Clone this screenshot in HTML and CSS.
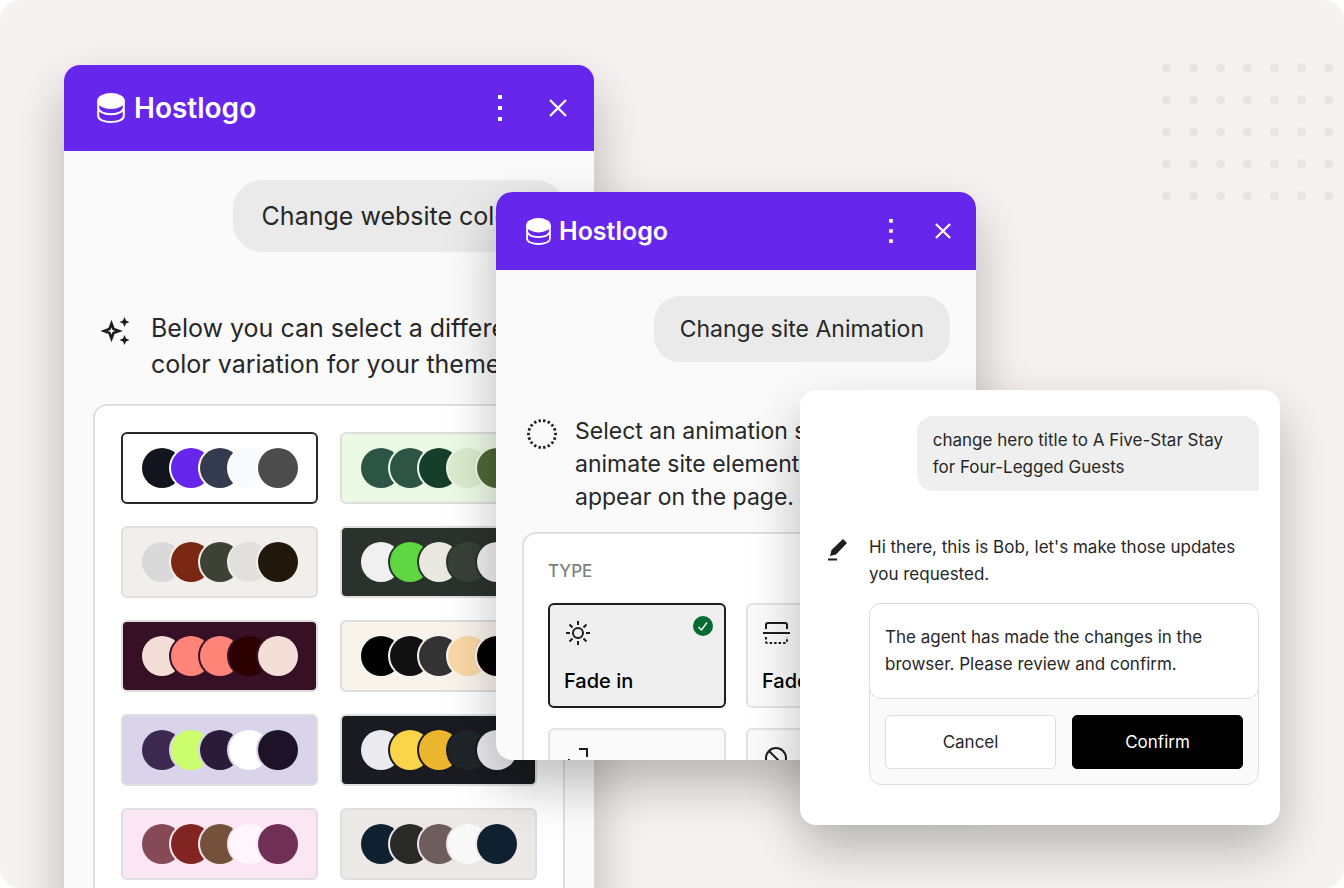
FILE: index.html
```html
<!DOCTYPE html>
<html lang="en">
<head>
  <meta charset="UTF-8" />
  <meta name="viewport" content="width=device-width, initial-scale=1.0"/>
  <title>Hostlogo Assistant</title>
  <link rel="stylesheet" href="styles.css">
</head>
<body>

<!-- Shared icons -->
<svg class="icon-defs" aria-hidden="true">
  <symbol id="logo" viewBox="0 0 28 30">
    <ellipse cx="14" cy="8" rx="13.800" ry="8" fill="#fff"/>
    <path fill="none" stroke="#fff" stroke-width="2" d="M1.200 8v15c0 3.500 5.800 6 12.800 6s12.800-2.500 12.800-6V8M1.200 15c1 3.700 6 6.200 12.800 6.200s11.800-2.500 12.800-6.200"/>
  </symbol>
  <symbol id="dots" viewBox="0 0 4 26">
    <path fill="#fff" d="M0 0h4v4H0zM0 11h4v4H0zM0 22h4v4H0z"/>
  </symbol>
  <symbol id="close" viewBox="0 0 18 18">
    <path fill="none" stroke="#fff" stroke-width="2.400" d="M1 1l16 16M17 1L1 17"/>
  </symbol>
</svg>

<main class="stage">
  <div class="dot-grid"></div>

  <!-- Color variations -->
  <section class="panel panel-colors">
    <header class="panel-header">
      <svg class="logo"><use href="#logo"/></svg>
      <span class="brand">Hostlogo</span>
      <button class="icon-btn menu-btn" aria-label="Menu"><svg><use href="#dots"/></svg></button>
      <button class="icon-btn close-btn" aria-label="Close"><svg><use href="#close"/></svg></button>
    </header>
    <div class="panel-body">
      <p class="bubble">Change website colors</p>
      <div class="message">
        <svg class="message-icon" viewBox="0 0 30 30" fill="#1e1e1e">
          <path fill="none" stroke="#1e1e1e" stroke-width="2.600" d="M10.500 7.500l2 5.500 5.500 2-5.500 2-2 5.500-2-5.500L3 15l5.500-2z"/>
          <path d="M23.500 1l1.500 3.500 3.500 1.500L25 7.500 23.500 11 22 7.500 18.500 6 22 4.500zM23.500 19l1.500 3.500 3.500 1.500-3.500 1.500-1.500 3.500-1.500-3.500-3.500-1.500 3.500-1.500z"/>
        </svg>
        <p>Below you can select a different<br>color variation for your theme.</p>
      </div>
      <div class="card swatches" id="swatches"></div>
    </div>
  </section>

  <!-- Animation picker -->
  <section class="panel panel-animation">
    <header class="panel-header">
      <svg class="logo"><use href="#logo"/></svg>
      <span class="brand">Hostlogo</span>
      <button class="icon-btn menu-btn" aria-label="Menu"><svg><use href="#dots"/></svg></button>
      <button class="icon-btn close-btn" aria-label="Close"><svg><use href="#close"/></svg></button>
    </header>
    <div class="panel-body">
      <p class="bubble">Change site Animation</p>
      <div class="message">
        <svg class="message-icon" viewBox="0 0 30 30">
          <circle cx="15" cy="15" r="13.500" fill="none" stroke="#1e1e1e" stroke-width="2.800" pathLength="90" stroke-dasharray="2.600 2.400" stroke-dashoffset="1.300"/>
        </svg>
        <p>Select an animation style to<br>animate site elements as they<br>appear on the page.</p>
      </div>
      <div class="card">
        <h2 class="card-title">TYPE</h2>
        <div class="tiles">
          <button class="tile selected" aria-pressed="true">
            <svg class="tile-icon" viewBox="0 0 28 28" fill="none" stroke="#1e1e1e" stroke-width="2">
              <circle cx="14" cy="14" r="5"/>
              <path d="M14 2v4M14 22v4M2 14h4M22 14h4M5.500 5.500l3 3M19.500 19.500l3 3M22.500 5.500l-3 3M8.500 19.500l-3 3"/>
            </svg>
            <span>Fade in</span>
            <svg class="check" viewBox="0 0 20 20">
              <circle cx="10" cy="10" r="10" fill="#056b31"/>
              <path d="M5.500 11l3 3 5.500-7.500" fill="none" stroke="#fff" stroke-width="1.400"/>
            </svg>
          </button>
          <button class="tile">
            <svg class="tile-icon" viewBox="0 0 28 28" fill="none" stroke="#1e1e1e" stroke-width="2">
              <path d="M4 10V6q0-2 2-2h17q2 0 2 2v4M1 14h27"/>
              <path stroke-dasharray="2.500 2" d="M4 18v5q0 1 1 1h19q1 0 1-1v-5"/>
            </svg>
            <span>Fade up</span>
          </button>
          <button class="tile" aria-label="Zoom in">
            <svg class="tile-icon" viewBox="0 0 28 28" fill="none" stroke="#1e1e1e" stroke-width="2">
              <path d="M15 5h8v8M5 15v8h8"/>
            </svg>
          </button>
          <button class="tile" aria-label="None">
            <svg class="tile-icon" viewBox="0 0 28 28" fill="none" stroke="#1e1e1e" stroke-width="2">
              <circle cx="14" cy="14" r="10"/>
              <path d="M7 7l14 14"/>
            </svg>
          </button>
        </div>
      </div>
    </div>
  </section>

  <!-- Confirm chat -->
  <section class="panel panel-confirm">
    <p class="bubble">change hero title to A Five-Star Stay<br>for Four-Legged Guests</p>
    <div class="message">
      <svg class="message-icon" viewBox="0 0 20 22" fill="#1e1e1e">
        <path d="M15 0l4 4L8 15.500 2 17l1.500-6z"/>
        <path d="M0 19.500h9v2H0z"/>
      </svg>
      <p>Hi there, this is Bob, let's make those updates<br>you requested.</p>
    </div>
    <div class="confirm-box">
      <p class="confirm-text">The agent has made the changes in the<br>browser. Please review and confirm.</p>
      <div class="confirm-actions">
        <button class="btn">Cancel</button>
        <button class="btn btn-dark">Confirm</button>
      </div>
    </div>
  </section>
</main>

<script>
// first colour is the background, the rest are the palette dots
const palettes = [
  ["#ffffff", "#12151e", "#6726eb", "#353b4e", "#f9fafd", "#4c4c4c"],
  ["#ecfae5", "#2d5545", "#2d5545", "#153e2b", "#daebce", "#4f6836"],
  ["#f2eeeb", "#d9d9d9", "#7a2813", "#3e4234", "#e1e0dc", "#1f180b"],
  ["#29332b", "#f0f0f0", "#5fd743", "#e9e9e0", "#374138", "#f0f0f0"],
  ["#381026", "#f3dfd8", "#ff8579", "#ff8579", "#2b0200", "#f3dfd8"],
  ["#f8f3eb", "#000000", "#111111", "#333333", "#fad8a6", "#000000"],
  ["#d9d4e9", "#3c2a50", "#cbfd6d", "#2a1b38", "#ffffff", "#1e1229"],
  ["#1a1b20", "#ebebef", "#fad54a", "#ecb72f", "#1f262a", "#ebebef"],
  ["#fae6f5", "#864956", "#822422", "#75503a", "#fff5fd", "#702f55"],
  ["#ece8e5", "#0f2031", "#2a2a28", "#6f5d5e", "#f8f8f8", "#0f2031"],
  ["#ffffff", "#12151e", "#6726eb", "#353b4e", "#f9fafd", "#4c4c4c"],
  ["#ecfae5", "#2d5545", "#2d5545", "#153e2b", "#daebce", "#4f6836"]
];

document.getElementById("swatches").innerHTML = palettes.map(([bg, ...colors], i) => `
  <button class="swatch${i === 0 ? " selected" : ""}" style="--bg: ${bg}" aria-label="Palette ${i + 1}">
    ${colors.map(c => `<span class="dot" style="background: ${c}"></span>`).join("")}
  </button>`).join("");
</script>

</body>
</html>
```

FILE: styles.css
```css
* {
  box-sizing: border-box;
}
body {
  margin: 0;
  background: #fff;
  color: #272727;
  font-family: Inter, sans-serif;
}
p, h2 {
  margin: 0;
}
button {
  font-family: inherit;
  color: inherit;
  cursor: pointer;
}
.icon-defs {
  position: absolute;
  width: 0;
  height: 0;
}

/* the panels share one grid row and overlap by column */
.stage {
  position: relative;
  display: grid;
  grid-template-columns: 432fr 98fr 206fr 176fr 304fr;
  align-items: start;
  height: 100vh;
  padding: 0 64px;
  overflow: hidden;
  background: #f5f2f1;
  border-radius: 20px;
}
.dot-grid {
  position: absolute;
  top: 52px;
  right: 2px;
  width: 189px;
  height: 161px;
  background: radial-gradient(circle, #e8e5e4 4px, transparent 5px) 0 0 / 27px 32px;
}

.panel {
  position: relative;
  grid-row: 1;
  background: #fafafa;
  border-radius: 16px;
  box-shadow: 0 24px 52px rgba(0, 0, 0, 0.26);
}
.panel-colors {
  grid-column: 1 / 3;
  margin-top: 65px;
  font-size: 25px;
  line-height: 36px;
}
.panel-animation {
  grid-column: 2 / 5;
  height: 568px;
  margin-top: 192px;
  overflow: hidden;
  font-size: 23px;
  line-height: 33px;
}
.panel-confirm {
  grid-column: 4 / 6;
  margin-top: 390px;
  padding: 26px 21px 40px 27px;
  background: #fff;
  font-size: 17px;
  line-height: 27px;
}

/* header */
.panel-header {
  display: flex;
  align-items: center;
  height: 86px;
  padding: 0 27px 0 33px;
  background: #6726eb;
  border-radius: 16px 16px 0 0;
  color: #fff;
}
.logo {
  width: 28px;
  height: 30px;
}
.brand {
  margin-left: 9px;
  font-size: 28px;
  font-weight: 600;
}
.icon-btn {
  display: flex;
  padding: 0;
  background: none;
  border: none;
}
.menu-btn {
  margin-left: auto;
}
.menu-btn svg {
  width: 4px;
  height: 26px;
}
.close-btn {
  margin-left: 47px;
}
.close-btn svg {
  width: 18px;
  height: 18px;
}
.panel-animation .panel-header {
  height: 78px;
  padding: 0 25px 0 30px;
}
.panel-animation .logo {
  width: 25px;
  height: 27px;
}
.panel-animation .brand {
  margin-left: 8px;
  font-size: 25px;
}
.panel-animation .menu-btn svg {
  height: 24px;
}
.panel-animation .close-btn {
  margin-left: 42px;
}
.panel-animation .close-btn svg {
  width: 16px;
  height: 16px;
}

/* chat */
.panel-body {
  padding: 29px;
}
.panel-animation .panel-body {
  padding: 26px;
}
.bubble {
  width: fit-content;
  margin-left: auto;
  padding: 18px 33px 18px 29px;
  background: #eaeaea;
  border-radius: 29px;
  white-space: nowrap;
}
.panel-animation .bubble {
  padding: 17px 26px 16px;
  border-radius: 26px;
}
.panel-confirm .bubble {
  padding: 11px 36px 10px 16px;
  background: #efefef;
  border-radius: 16px 16px 0 16px;
}
.message {
  display: flex;
  gap: 20px;
  margin-top: 58px;
  padding-left: 8px;
  white-space: nowrap;
}
.message-icon {
  flex: none;
  width: 30px;
  height: 30px;
  margin-top: 6px;
}
.panel-animation .message {
  gap: 18px;
  margin-top: 53px;
  padding-left: 5px;
}
.panel-animation .message-icon {
  margin-top: 4px;
}
.panel-confirm .message {
  gap: 21px;
  margin-top: 43px;
  padding-left: 1px;
}
.panel-confirm .message-icon {
  width: 20px;
  height: 22px;
  margin-top: 5px;
}

.card {
  margin-top: 22px;
  padding: 26px;
  background: #fff;
  border: 2px solid #e0e0e0;
  border-radius: 14px;
}
.swatches {
  display: grid;
  grid-template-columns: 1fr 1fr;
  gap: 22px;
}
.swatch {
  display: flex;
  justify-content: center;
  align-items: center;
  height: 72px;
  padding: 0;
  background: var(--bg);
  border: 2px solid #dedede;
  border-radius: 6px;
}
.swatch.selected {
  border-color: #2a2a2a;
}
.dot {
  width: 40px;
  height: 40px;
  border-radius: 50%;
  box-shadow: 0 0 0 2px var(--bg);
}
.dot + .dot {
  margin-left: -11px;
}

/* animation types */
.panel-animation .card {
  margin-top: 18px;
  padding: 24px;
}
.card-title {
  color: #808080;
  font-size: 17px;
  font-weight: 500;
  line-height: 27px;
}
.tiles {
  display: grid;
  grid-template-columns: 1fr 1fr;
  gap: 20px;
  margin-top: 18px;
}
.tile {
  position: relative;
  display: flex;
  flex-direction: column;
  justify-content: space-between;
  align-items: flex-start;
  height: 105px;
  padding: 14px;
  background: #fafafa;
  border: 2px solid #e3e3e3;
  border-radius: 6px;
  color: #000;
  font-size: 20px;
  font-weight: 500;
  line-height: 22px;
}
.tile.selected {
  background: #efefef;
  border-color: #1e1e1e;
}
.tile-icon {
  width: 28px;
  height: 28px;
}
.check {
  position: absolute;
  top: 11px;
  right: 11px;
  width: 20px;
  height: 20px;
}

/* confirm */
.confirm-box {
  margin: 15px 0 0 42px;
  background: #fafafa;
  border: 1px solid #dedede;
  border-radius: 12px;
}
.confirm-text {
  margin: -1px;
  padding: 20px 15px;
  background: #fff;
  border: 1px solid #dedede;
  border-radius: 12px;
  white-space: nowrap;
}
.confirm-actions {
  display: flex;
  gap: 16px;
  padding: 17px 15px 15px;
}
.btn {
  flex: 1;
  height: 54px;
  background: #fff;
  border: 1px solid #dedede;
  border-radius: 5px;
  font-size: 17px;
}
.btn-dark {
  background: #000;
  border-color: #000;
  color: #fff;
}
```
